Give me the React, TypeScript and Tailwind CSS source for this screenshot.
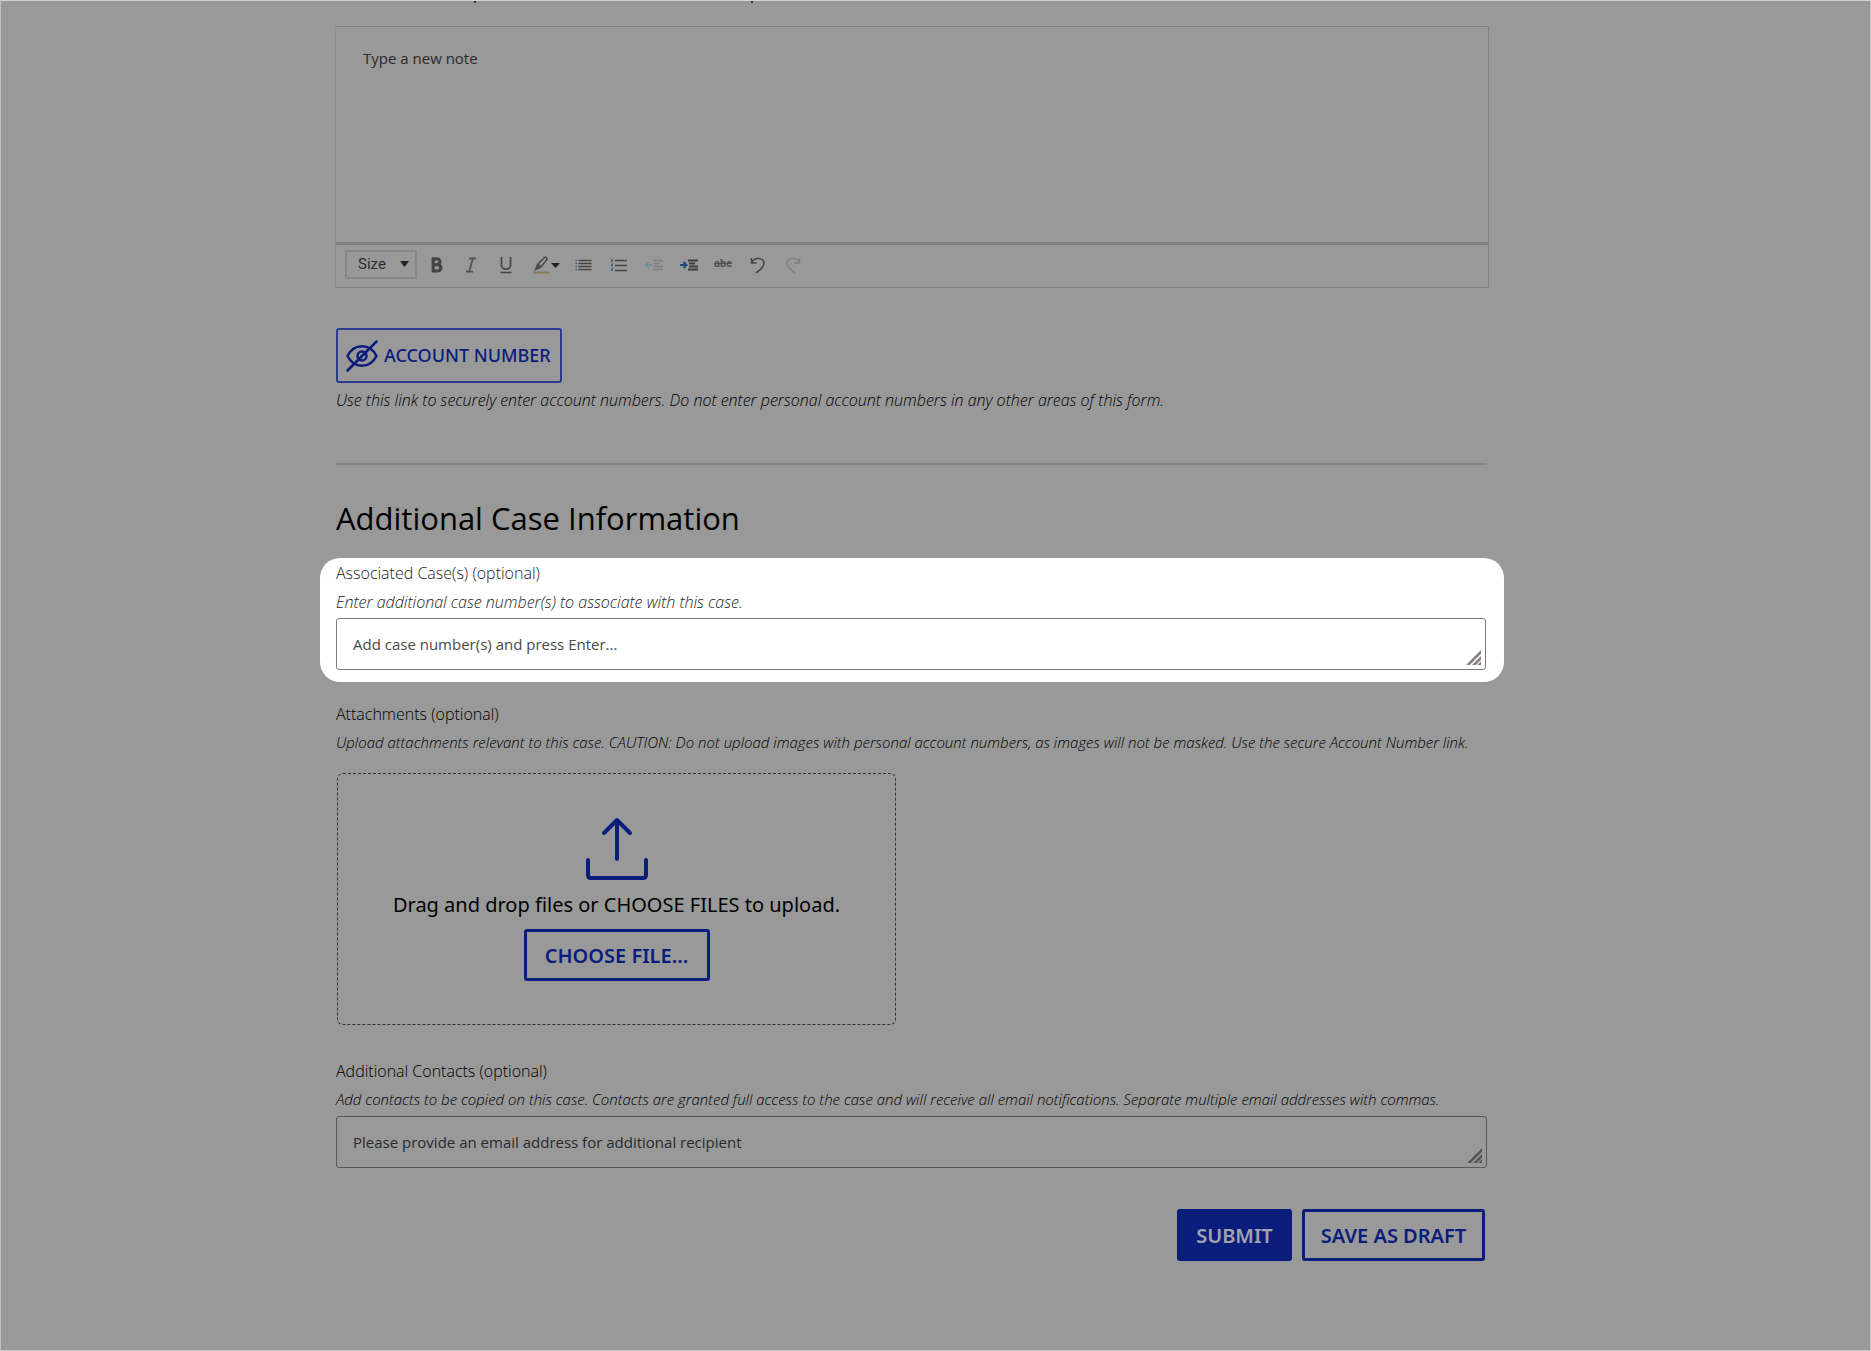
import React from 'react';

const label = 'block text-[16px] leading-[24px] font-light';
const hint = 'italic leading-[24px] font-light';

function Grip() {
  return (
    <svg className="pointer-events-none absolute bottom-[5px] right-[5px] h-[15px] w-[15px]" viewBox="0 0 16 16" fill="currentColor" aria-hidden="true">
      <path d="M0 16 16 0v4L4 16zM6.500 16 16 6.500v4L10.500 16zM12 16l4-4v4z" />
    </svg>
  );
}

function Field({ id, placeholder, className }: { id: string; placeholder: string; className: string }) {
  return (
    <div className={'relative ' + className}>
      <textarea
        id={id}
        placeholder={placeholder}
        className="block h-[52px] w-full resize-none overflow-hidden rounded-[3px] border border-[var(--line)] bg-transparent px-4 py-[13px] text-[15px] leading-[24px] placeholder:text-[var(--ph)]"
      />
      <Grip />
    </div>
  );
}

function Tool({ name, children, width = 'w-[35px]' }: { name: string; children: React.ReactNode; width?: string }) {
  return (
    <button type="button" aria-label={name} className={'flex h-[28px] shrink-0 items-center justify-center ' + width}>
      {children}
    </button>
  );
}

function Svg({ children, w = 20, h = 20 }: { children: React.ReactNode; w?: number; h?: number }) {
  return (
    <svg width={w} height={h} viewBox={`0 0 ${w} ${h}`} fill="none" stroke="#444" strokeWidth="1.500" aria-hidden="true">
      {children}
    </svg>
  );
}

function Toolbar() {
  return (
    <div className="flex h-[45px] items-center border-t-[3px] border-[#808080] pb-[3px] pl-[9px]">
      <div className="relative flex">
        <select aria-label="Size" className="h-[29px] w-[72px] appearance-none border-2 border-[#868686] bg-transparent pl-[11px] font-[Roboto] text-[15px] text-[#2c2c2c]">
          <option>Size</option>
        </select>
        <svg className="pointer-events-none absolute right-[8px] top-[11px]" width="9" height="6" aria-hidden="true">
          <path d="M0 0h9L4.500 6z" fill="#222" />
        </svg>
      </div>
      <div className="ml-[2px] flex">
        <Tool name="Bold">
          <Svg>
            <path d="M6.200 3.900H10a2.900 2.900 0 0 1 0 5.800H6.200zM6.200 9.700h4.500a3.100 3.100 0 0 1 0 6.300H6.200z" strokeWidth="3.200" />
          </Svg>
        </Tool>
        <Tool name="Italic" width="w-[34px]">
          <Svg><path d="M8 3.300h7M5 16.700h7M12 3.300 8 16.700" stroke="#505050" strokeWidth="1.700" /></Svg>
        </Tool>
        <Tool name="Underline">
          <Svg><path d="M5.500 2v8c0 5.500 9 5.500 9 0V2M4.500 17.500h11" strokeWidth="1.700" /></Svg>
        </Tool>
        <Tool name="Highlight color" width="w-[45px]">
          <Svg w={28}>
            <path d="M3.500 14.500 6 9l6.500-6.500c1.200-1.200 3.500.800 2.300 2.300L9 12zM6 9l3 3M3.500 14.500l3-3" strokeWidth="1.400" />
            <path d="M1 17.500h16" stroke="#8a7a50" strokeWidth="2" />
            <path d="M19 8h9l-4.500 5z" fill="#222" stroke="none" />
          </Svg>
        </Tool>
        <Tool name="Bulleted list" width="w-[32px]">
          <Svg>
            <path d="M4.500 5.500h13M4.500 8.500h13M4.500 11.500h13M4.500 14.500h13" strokeWidth="1.300" />
            <path d="M1.500 5.500h1.500M1.500 8.500h1.500M1.500 11.500h1.500M1.500 14.500h1.500" stroke="#3a5a80" />
          </Svg>
        </Tool>
        <Tool name="Numbered list" width="w-[37px]">
          <Svg>
            <path d="M6 5.500h12M6 10.500h12M6 15.500h12" />
            <path d="M3 4v13" stroke="#4d6685" strokeDasharray="3 1.500" strokeWidth="2" />
          </Svg>
        </Tool>
        <Tool name="Decrease indent" width="w-[34px]">
          <Svg>
            <path d="M9 5.500h10M10 8.500h6M10 11.500h9M9 14.500h10" stroke="#808080" />
            <path d="M8.500 10H2M5 7l-3 3 3 3" stroke="#7286a0" />
          </Svg>
        </Tool>
        <Tool name="Increase indent">
          <Svg>
            <path d="M9 5.500h10M10 8.500h6M10 11.500h9M9 14.500h10" stroke="#3d3d3d" strokeWidth="1.800" />
            <path d="M1 10h6.500M4.500 7l3 3-3 3" stroke="#1f4a80" strokeWidth="2" />
          </Svg>
        </Tool>
        <Tool name="Strikethrough" width="w-[34px]">
          <span className="font-[Roboto] text-[11px] font-bold text-[#505050] line-through">abc</span>
        </Tool>
        <Tool name="Undo">
          <Svg><path d="M3.500 3v5h5M3.500 8c3-6.500 12.500-5.500 12.500.500 0 4-4 6-8 9.500" /></Svg>
        </Tool>
        <Tool name="Redo">
          <Svg><path d="M16.500 3v5h-5M16.500 8C13.500 1.500 4 2.500 4 8.500c0 4 4 6 8 9.500" stroke="#7f7f7f" /></Svg>
        </Tool>
      </div>
    </div>
  );
}

export default function App() {
  return (
    <div className="min-h-screen border border-x-[#c0c0c0] border-b-[#c8c8c8] border-t-[#d0d0d0] bg-[#999] pl-[319px] pr-[381px] font-['Open_Sans','Noto_Sans',sans-serif] text-black">
      <main className="flex flex-col">
        <div className="flex h-[25px] items-start pl-[154px]" aria-hidden="true">
          <span className="mr-[275px] h-[2px] w-[2px] bg-[#333]" />
          <span className="h-[2px] w-[2px] bg-[#333]" />
        </div>
        <section className="ml-[15px] border border-[#808080] border-l-[#8f8f8f]">
          <textarea aria-label="Note" placeholder="Type a new note" className="block h-[215px] w-full resize-none bg-transparent px-[27px] py-[19px] text-[15px] leading-[24px] placeholder:text-[#2a2a2a]" />
          <Toolbar />
        </section>

        <section className="ml-4 mr-[2px] mt-[40px] border-b-2 border-[#828282] pb-[51px]">
          <button type="button" className="flex h-[55px] items-center gap-[6px] rounded-[3px] border-2 border-[#2a3b92] pl-2 pr-[9px] font-['Noto_Sans'] text-[18px] font-medium text-[#0b1d7c]">
            <svg width="32" height="32" viewBox="0 0 32 32" fill="none" stroke="currentColor" strokeWidth="2.500" strokeLinecap="round" aria-hidden="true">
              <path d="M1.500 16C8 3 24 3 30.500 16 24 29 8 29 1.500 16z" />
              <circle cx="16" cy="16" r="4.500" />
              <path d="M1.500 30.500 30.500 1.500" />
            </svg>
            ACCOUNT NUMBER
          </button>
          <p className={hint + ' mt-[5px] text-[16px]'}>Use this link to securely enter account numbers. Do not enter personal account numbers in any other areas of this form.</p>
        </section>

        <h1 className="ml-4 mt-[32px] text-[31px] leading-[42px] text-black">Additional Case Information</h1>

        <section className="-mr-[15px] mt-[19px] h-[124px] rounded-[20px] bg-white pl-4 pr-[18px] pt-[3px] text-[#1c1c1c] [--line:#807878] [--ph:#4a4a4a]">
          <label htmlFor="cases" className={label}>Associated Case(s) (optional)</label>
          <p className={hint + ' mt-[5px] text-[16px]'}>Enter additional case number(s) to associate with this case.</p>
          <Field id="cases" placeholder="Add case number(s) and press Enter..." className="mt-[4px] text-[#888080]" />
        </section>

        <section className="ml-4 mt-[20px]">
          <label htmlFor="files" className={label}>Attachments (optional)</label>
          <p className={hint + ' mt-[4px] text-[15px]'}>Upload attachments relevant to this case. CAUTION: Do not upload images with personal account numbers, as images will not be masked. Use the secure Account Number link.</p>
          <div className="ml-[1px] mt-[19px] flex h-[252px] w-[559px] flex-col items-center rounded-[6px] border border-dashed border-[#333] pt-[43px]">
            <svg width="64" height="64" viewBox="0 0 64 64" fill="none" stroke="#0b1d7c" strokeWidth="4" strokeLinecap="round" strokeLinejoin="round" aria-hidden="true">
              <path d="M32 42V3M19 16 32 3l13 13M3 43v15q0 3 3 3h52q3 0 3-3V43" />
            </svg>
            <p className="mt-[8px] font-['Noto_Sans'] text-[20px] leading-[32px] text-black">Drag and drop files or CHOOSE FILES to upload.</p>
            <button id="files" type="button" className="mt-[8px] h-[52px] w-[186px] rounded-[3px] border-[3px] border-[#0b1d7c] pt-[2px] font-['Noto_Sans'] text-[20px] font-semibold text-[#0b1d7c]">CHOOSE FILE...</button>
          </div>
        </section>

        <section className="ml-4 mr-[2px] mt-[34px] [--line:#5c5856] [--ph:#2a2a2a]">
          <label htmlFor="contacts" className={label}>Additional Contacts (optional)</label>
          <p className={hint + ' mt-[4px] text-[15px]'}>Add contacts to be copied on this case. Contacts are granted full access to the case and will receive all email notifications. Separate multiple email addresses with commas.</p>
          <Field id="contacts" placeholder="Please provide an email address for additional recipient" className="mt-[5px] text-[#555]" />
        </section>

        <div className="mr-[4px] mt-[41px] flex justify-end gap-[10px] font-['Noto_Sans'] text-[20px] font-semibold">
          <button type="submit" className="h-[52px] w-[115px] rounded-[3px] bg-[#0b1d7c] pt-[2px] text-[#a4a4ac]">SUBMIT</button>
          <button type="button" className="h-[52px] w-[183px] rounded-[3px] border-[3px] border-[#0b1d7c] pt-[2px] text-[#0b1d7c]">SAVE AS DRAFT</button>
        </div>
      </main>
    </div>
  );
}
